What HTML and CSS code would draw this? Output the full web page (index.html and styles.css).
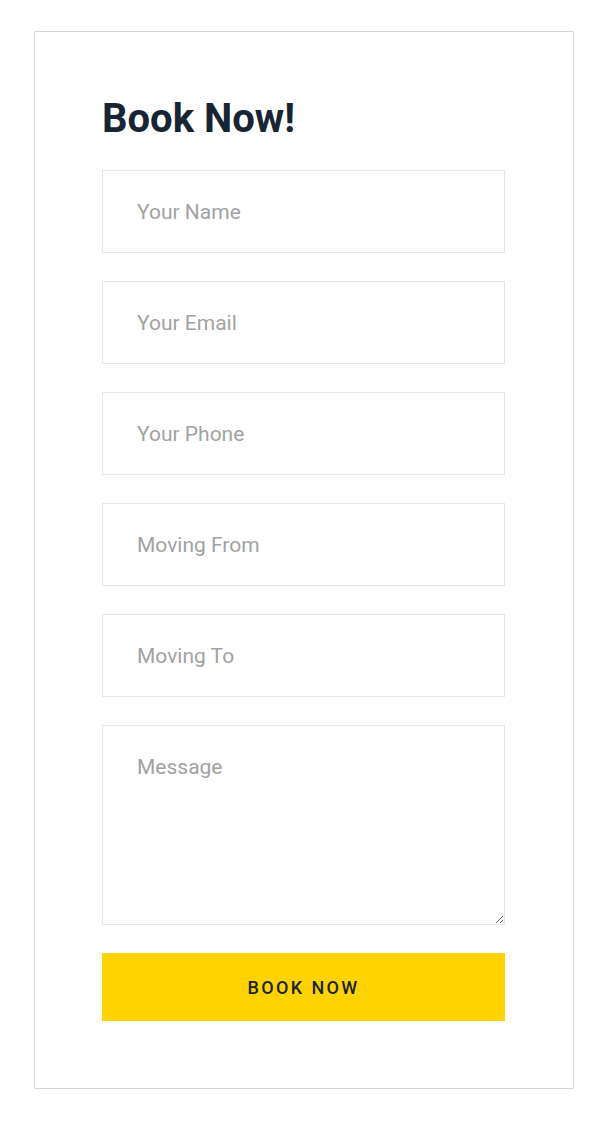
FILE: index.html
```html
<!DOCTYPE html>
<html lang="en">
<head>
<meta charset="utf-8">
<title>Book Now</title>
<link rel="stylesheet" href="styles.css">
</head>
<body>
<div class="page">
  <form class="card">
    <h2 class="title">Book Now!</h2>
    <input class="field" type="text" placeholder="Your Name">
    <input class="field" type="email" placeholder="Your Email">
    <input class="field" type="tel" placeholder="Your Phone">
    <input class="field" type="text" placeholder="Moving From">
    <input class="field" type="text" placeholder="Moving To">
    <textarea class="field area" placeholder="Message"></textarea>
    <button class="btn" type="button">BOOK NOW</button>
  </form>
</div>
</body>
</html>
```

FILE: styles.css
```css
html, body {
  margin: 0;
  padding: 0;
  background: #ffffff;
}
.page {
  padding: 31px 27px 34px 34px;
}
.card {
  box-sizing: border-box;
  width: 540px;
  border: 1px solid #d4d4d4;
  padding: 63px 68px 67px 67px;
  display: flex;
  flex-direction: column;
  gap: 28px;
  font-family: Roboto, "Liberation Sans", sans-serif;
}
.title {
  margin: 0 0 -1px 0;
  font-size: 40px;
  line-height: 48px;
  font-weight: 700;
  color: #172434;
}
.field {
  box-sizing: border-box;
  width: 100%;
  height: 83px;
  border: 1px solid #e6e6e6;
  border-radius: 0;
  padding: 0 34px;
  font-family: Roboto, "Liberation Sans", sans-serif;
  font-size: 21px;
  color: #333;
  background: #fff;
  outline: none;
  margin: 0;
}
.field::placeholder {
  color: #a2a2a2;
  opacity: 1;
}
.area {
  height: 200px;
  padding: 29px 34px;
  line-height: 24px;
  resize: vertical;
  display: block;
}
.btn {
  height: 68px;
  width: 100%;
  margin: 0;
  border: none;
  background: #ffd300;
  color: #172434;
  font-family: Roboto, "Liberation Sans", sans-serif;
  font-size: 18px;
  font-weight: 500;
  letter-spacing: 2.4px;
  cursor: pointer;
}
```
